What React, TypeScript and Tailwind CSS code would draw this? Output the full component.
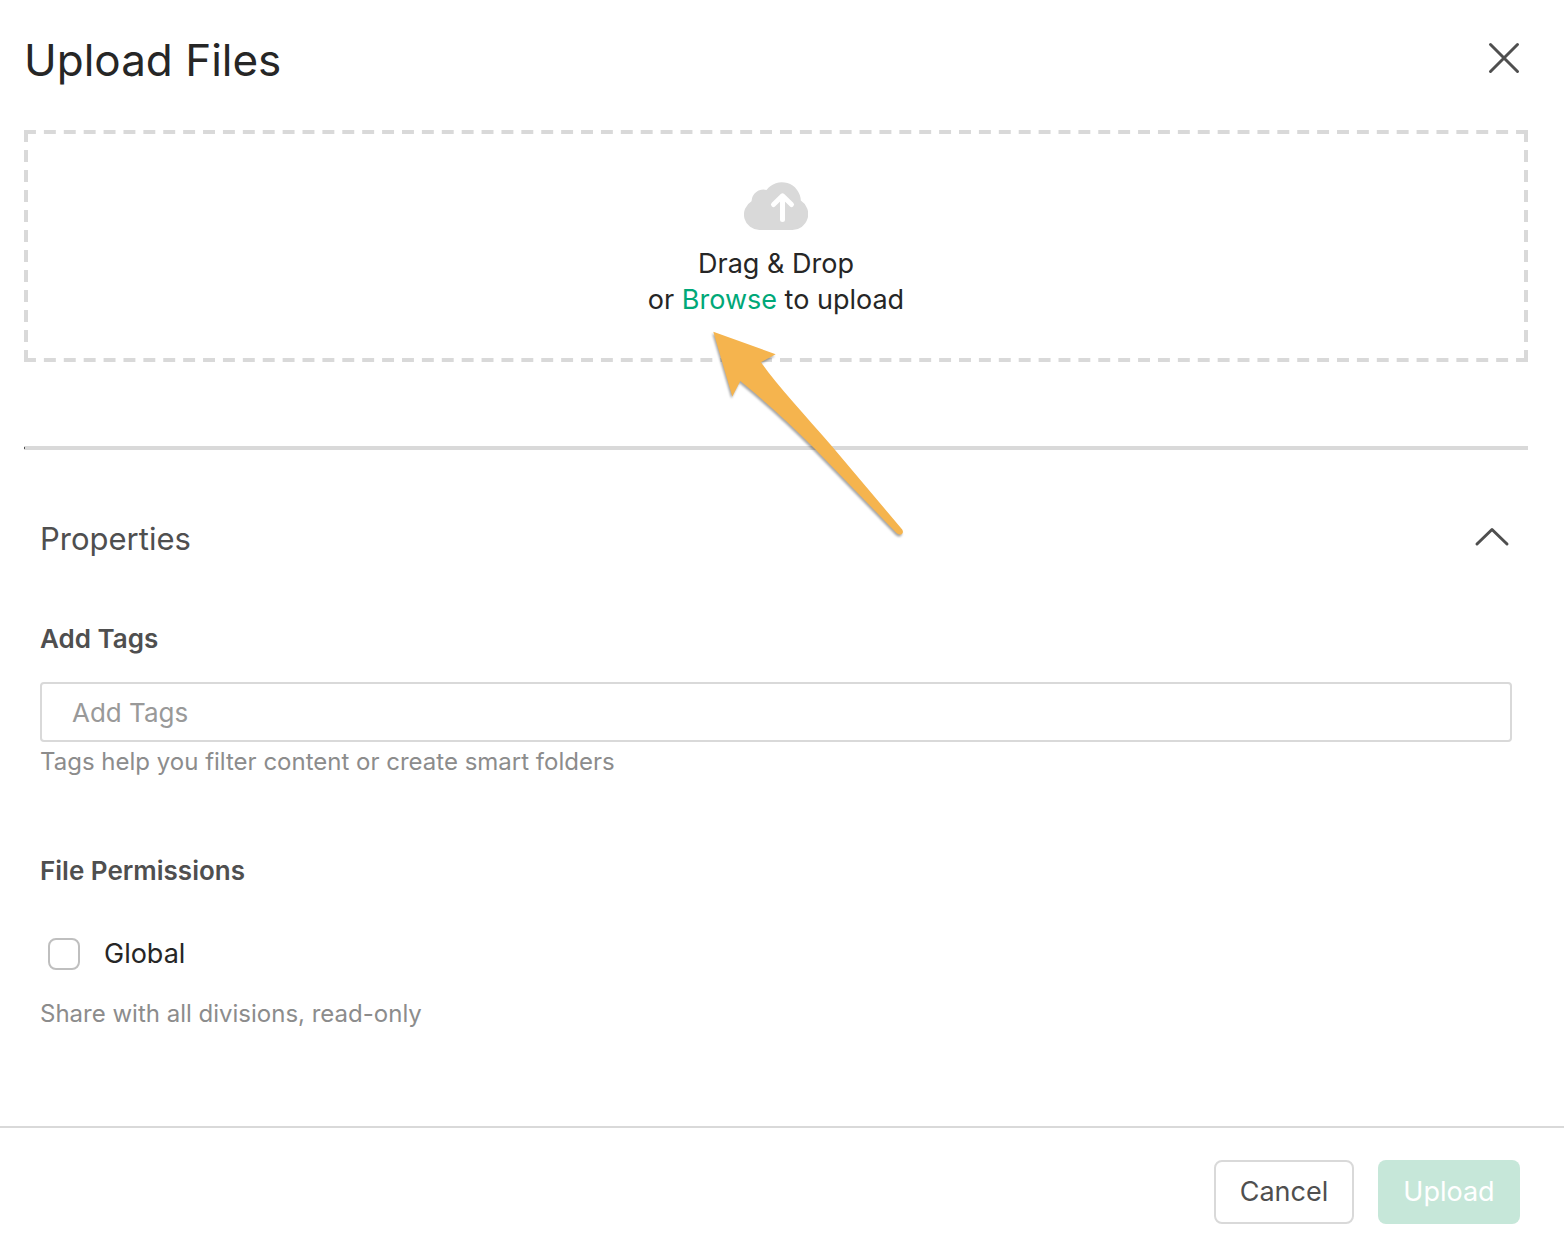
import { useState } from "react";

function CloudUploadIcon() {
  return (
    <svg width="64" height="48" viewBox="0 0 64 48" aria-hidden="true">
      <path
        d="M15.5 48A15.5 15.5 0 0 1 7.5 19.2A12 12 0 0 1 22.5 8A19 19 0 0 1 56.8 18.5A16 16 0 0 1 48 48Z"
        fill="#d9d9d9"
      />
      <path
        d="M38.5 14V37.5M29.5 22.5L38.5 13.8L47.5 22.5"
        fill="none"
        stroke="#fff"
        strokeWidth="5"
        strokeLinecap="round"
        strokeLinejoin="round"
      />
    </svg>
  );
}

// dashes are spread so that every side starts and ends on a full one
function DashedOutline() {
  return (
    <svg
      className="pointer-events-none absolute inset-0 h-full w-full"
      stroke="#d9d9d9"
      strokeWidth="8"
      strokeDasharray="12 8"
      aria-hidden="true"
    >
      <line x1="0" y1="0" x2="100%" y2="0" pathLength={1512} />
      <line x1="0" y1="100%" x2="100%" y2="100%" pathLength={1512} />
      <line x1="0" y1="0" x2="0" y2="100%" pathLength={232} />
      <line x1="100%" y1="0" x2="100%" y2="100%" pathLength={232} />
    </svg>
  );
}

function PointerArrow() {
  return (
    <svg
      width="204"
      height="216"
      viewBox="0 0 204 216"
      className="pointer-events-none absolute top-[198px] left-1/2 z-10 -ml-[68px] drop-shadow-[-1px_2px_1px_rgba(0,0,0,0.35)]"
      aria-hidden="true"
    >
      <path
        d="M5.3 3.7L67.7 26.3L53 34.3C71 60 97 87 123.7 118L194.2 201.5C196.5 205 193 208.5 189 205.5L106 120C83 97 58 74 32.3 53L24.3 68.5Z"
        fill="#f5b44e"
      />
    </svg>
  );
}

export default function App() {
  const [tags, setTags] = useState("");
  const [isGlobal, setIsGlobal] = useState(false);
  const [open, setOpen] = useState(true);

  return (
    <div className="bg-white font-[Inter,'Liberation_Sans',sans-serif] text-[#262626]">
      <header className="flex items-start justify-between pt-7 pr-9 pb-[38px] pl-6">
        <h1 className="text-[44px] leading-[64px]">Upload Files</h1>
        <button
          type="button"
          aria-label="Close"
          className="mt-1.5 flex size-12 items-center justify-center text-[#4f4f4f]"
        >
          <svg width="32" height="32" viewBox="0 0 32 32" aria-hidden="true">
            <path
              d="M2.5 2.5L29.5 29.5M29.5 2.5L2.5 29.5"
              stroke="currentColor"
              strokeWidth="3"
              strokeLinecap="round"
            />
          </svg>
        </button>
      </header>

      <main className="pr-9 pb-24 pl-6">
        <div className="relative">
          <div className="relative flex h-[232px] flex-col items-center pt-[52px]">
            <DashedOutline />
            <CloudUploadIcon />
            <p className="pt-4 text-center text-[27px] leading-9">
              Drag &amp; Drop
              <br />
              or{" "}
              <a href="#browse" className="text-[#00a878]">
                Browse
              </a>{" "}
              to upload
            </p>
          </div>
          <PointerArrow />
        </div>

        <div className="mt-[84px] flex h-1 items-center bg-[#d9d9d9]">
          <div className="h-0.5 w-px bg-[#4f4f4f]" />
        </div>

        <section className="px-4 pt-[67px]">
          <div className="flex items-start justify-between">
            <h2 className="text-[31px] leading-[44px] text-[#4f4f4f]">
              Properties
            </h2>
            <button
              type="button"
              aria-label="Toggle properties"
              aria-expanded={open}
              onClick={() => setOpen(!open)}
              className="flex size-10 items-center justify-center text-[#4f4f4f]"
            >
              <svg
                width="36"
                height="20"
                viewBox="0 0 36 20"
                className={open ? "" : "rotate-180"}
                aria-hidden="true"
              >
                <path
                  d="M3 17L18 2.5L33 17"
                  fill="none"
                  stroke="currentColor"
                  strokeWidth="3"
                  strokeLinecap="round"
                  strokeLinejoin="round"
                />
              </svg>
            </button>
          </div>

          {open && (
            <>
              <div className="pt-[60px]">
                <label
                  htmlFor="tags"
                  className="block text-[26px] leading-9 font-semibold text-[#4f4f4f]"
                >
                  Add Tags
                </label>
                <input
                  id="tags"
                  type="text"
                  placeholder="Add Tags"
                  value={tags}
                  onChange={(e) => setTags(e.target.value)}
                  className="mt-[25px] block h-[60px] w-full rounded border-2 border-[#d9d9d9] px-[30px] text-[26px] outline-none placeholder:text-[#999999]"
                />
                <p className="pt-1 text-2xl text-[#8c8c8c]">
                  Tags help you filter content or create smart folders
                </p>
              </div>

              <fieldset className="pt-[75px]">
                <legend className="contents text-[26px] leading-9 font-semibold text-[#4f4f4f]">
                  File Permissions
                </legend>
                <label className="mt-[47px] flex h-9 items-center gap-6 pl-2 text-[27px] leading-9">
                  <input
                    type="checkbox"
                    checked={isGlobal}
                    onChange={(e) => setIsGlobal(e.target.checked)}
                    className="size-8 appearance-none rounded-lg border-2 border-[#bfbfbf] bg-white checked:border-[#00a878] checked:bg-[#00a878]"
                  />
                  Global
                </label>
                <p className="pt-[26px] text-2xl text-[#8c8c8c]">
                  Share with all divisions, read-only
                </p>
              </fieldset>
            </>
          )}
        </section>
      </main>

      <footer className="flex justify-end gap-6 border-t-2 border-[#d9d9d9] pt-8 pr-11 pb-[18px]">
        <button
          type="button"
          className="h-16 w-[140px] rounded-lg border-2 border-[#d9d9d9] text-[27px] text-[#4f4f4f]"
        >
          Cancel
        </button>
        <button
          type="button"
          disabled
          className="h-16 w-[142px] rounded-lg bg-[#c6e7d9] text-[27px] text-white"
        >
          Upload
        </button>
      </footer>
    </div>
  );
}
